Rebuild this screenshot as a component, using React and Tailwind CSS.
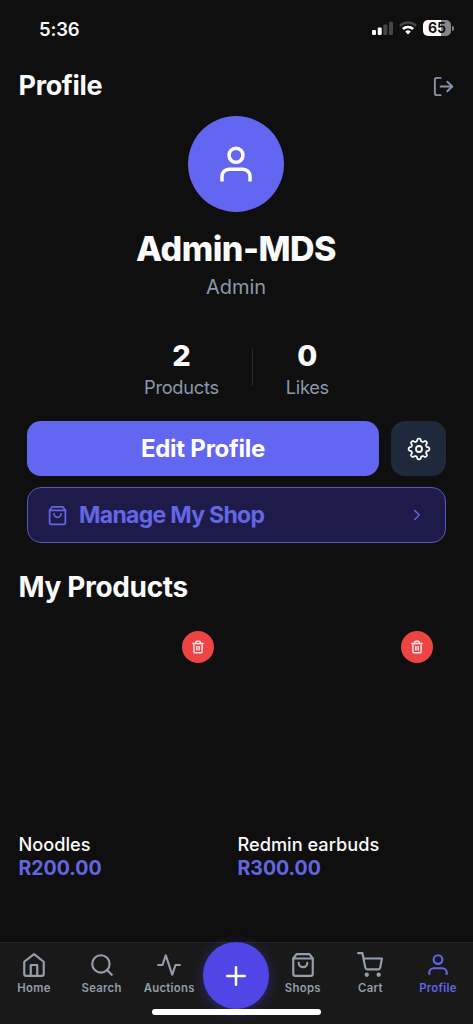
import {
    FiActivity,
    FiChevronRight,
    FiHome,
    FiLogOut,
    FiPlus,
    FiSearch,
    FiShoppingBag,
    FiShoppingCart,
    FiTrash2,
    FiUser,
} from "react-icons/fi";

const products = [
    { id: 1, name: "Noodles", price: "R200.00" },
    { id: 2, name: "Redmin earbuds", price: "R300.00" },
];

const leftTabs = [
    { label: "Home", Icon: FiHome },
    { label: "Search", Icon: FiSearch },
    { label: "Auctions", Icon: FiActivity },
];

const rightTabs = [
    { label: "Shops", Icon: FiShoppingBag },
    { label: "Cart", Icon: FiShoppingCart },
    { label: "Profile", Icon: FiUser, active: true },
];

// eight rounded teeth around the centre
const gearPoints = Array.from({ length: 192 }, (_, i) => {
    const angle = (i / 192) * Math.PI * 2;
    const radius = 9.1 + 1.3 * Math.tanh(1.8 * Math.cos(angle * 8));
    return `${(12 + radius * Math.cos(angle)).toFixed(2)},${(12 + radius * Math.sin(angle)).toFixed(2)}`;
}).join(" ");

function GearIcon({ className }) {
    return (
        <svg className={className} viewBox="0 0 24 24" fill="none" stroke="currentColor" strokeWidth="1.8" strokeLinejoin="round">
            <polygon points={gearPoints} />
            <circle cx="12" cy="12" r="3" />
        </svg>
    );
}

function StatusBar() {
    return (
        <div className="flex h-14 shrink-0 items-center justify-between pl-[39px] pr-[19px]">
            <span className="mt-px text-[18.5px] leading-6 font-semibold tracking-[-0.2px]">5:36</span>
            <div className="flex items-center gap-[6px]">
                <svg width="22" height="14" viewBox="0 0 22 14">
                    <rect x="1" y="9" width="4" height="5" rx="1" fill="#fff" />
                    <rect x="6.7" y="6.5" width="4" height="7.5" rx="1" fill="#fff" />
                    <rect x="12.3" y="3.5" width="4" height="10.5" rx="1" fill="#464646" />
                    <rect x="18" y="0.8" width="4" height="13.2" rx="1" fill="#464646" />
                </svg>
                <svg width="18" height="14" viewBox="0 0 18 14" fill="none" strokeWidth="2.5">
                    <path d="M1 4.8a11.5 11.5 0 0 1 16 0" stroke="#464646" />
                    <path d="M3.8 8a7.5 7.5 0 0 1 10.4 0" stroke="#fff" />
                    <path d="M9 13.5 6.2 10.7a4 4 0 0 1 5.6 0z" fill="#fff" />
                </svg>
                <div className="flex items-center gap-px">
                    <div className="flex h-4 w-7 items-center justify-center rounded-[5px] bg-linear-to-r from-white from-65% to-[#858585] to-65%">
                        <span className="text-[14px] leading-4 font-bold text-[#111]">65</span>
                    </div>
                    <div className="h-[5px] w-[2px] rounded-r-full bg-[#858585]" />
                </div>
            </div>
        </div>
    );
}

function Stat({ value, label }) {
    return (
        <div className="flex flex-col items-center">
            <span className="text-[29px] leading-9 font-extrabold">{value}</span>
            <span className="-mt-px pb-px text-[18.3px] leading-7 tracking-[-0.3px] text-[#8b98ab]">{label}</span>
        </div>
    );
}

function ProductCard({ name, price }) {
    return (
        <div className="flex w-[200px] flex-col">
            <div className="flex h-[212px] justify-end pt-[11px] pr-1">
                <button className="flex size-8 items-center justify-center rounded-full bg-[#ef4444]">
                    <FiTrash2 className="size-[14px] text-[#ffe3e3]" strokeWidth="2.6" />
                </button>
            </div>
            <span className="pl-[0.5px] text-[18.2px] leading-6 font-medium">{name}</span>
            <span className="pl-[0.5px] text-[19.5px] leading-6 font-bold text-[#6366e0]">{price}</span>
        </div>
    );
}

function Tab({ label, Icon, active }) {
    return (
        <button
            className={`flex w-[67.6px] shrink-0 flex-col items-center pt-[9px] ${
                active ? "text-[#6366e5]" : "text-[#959ead]"
            }`}
        >
            <Icon className="size-[26px]" strokeLinecap={active ? "butt" : "round"} />
            <span className="mt-[2px] text-[11.3px] leading-4 font-semibold tracking-[0.3px]">{label}</span>
        </button>
    );
}

export default function App() {
    return (
        <div className="flex h-[1024px] w-[473px] flex-col overflow-hidden bg-[#0f0f0f] font-['Inter',sans-serif] text-[#fafafa]">
            <StatusBar />

            <header className="flex h-[60px] shrink-0 items-center justify-between pl-[18.5px] pr-[18px]">
                <h1 className="text-[27px] leading-8 font-bold tracking-[-0.35px]">Profile</h1>
                <FiLogOut className="size-[23px] text-[#8793a8]" />
            </header>

            <main className="flex flex-1 flex-col">
                <section className="flex flex-col items-center pr-px">
                    <div className="flex size-24 items-center justify-center rounded-full bg-[#6366f1]">
                        <FiUser className="size-[42px] text-white" strokeLinecap="square" />
                    </div>
                    <h2 className="mt-[17px] text-[34px] leading-10 font-extrabold tracking-[-0.5px]">Admin-MDS</h2>
                    <p className="mt-[4px] mb-px text-[20px] leading-7 text-[#8b98ab]">Admin</p>
                </section>

                <section className="mt-[36px] flex items-center justify-center gap-[33px]">
                    <Stat value="2" label="Products" />
                    <div className="mt-[-5px] h-[37px] w-px bg-[#252a35]" />
                    <Stat value="0" label="Likes" />
                </section>

                <section className="mt-[19px] flex flex-col gap-[11px] px-[27px]">
                    <div className="flex gap-3">
                        <button className="h-[55px] flex-1 rounded-[14px] bg-[#6366f1] text-[24px] font-bold tracking-[-0.25px] text-white">
                            Edit Profile
                        </button>
                        <button className="flex size-[55px] items-center justify-center rounded-[14px] bg-[#1e293b]">
                            <GearIcon className="size-6" />
                        </button>
                    </div>
                    <button className="flex h-[56px] items-center rounded-[14px] border border-[#5558bf] bg-[#1e1b4b] px-[19px] text-[#6366e5]">
                        <FiShoppingBag className="size-[21px]" />
                        <span className="ml-[11px] text-[23px] leading-8 font-bold tracking-[-0.7px]">
                            Manage My Shop
                        </span>
                        <FiChevronRight className="ml-auto size-[18px]" />
                    </button>
                </section>

                <section className="mt-[27px] px-[18px]">
                    <h2 className="pl-[0.5px] text-[28px] leading-[34px] font-bold tracking-[-0.35px]">My Products</h2>
                    <div className="mt-[16px] flex gap-[19px]">
                        {products.map((product) => (
                            <ProductCard key={product.id} name={product.name} price={product.price} />
                        ))}
                    </div>
                </section>
            </main>

            <nav className="relative flex h-[82px] shrink-0 justify-center border-t border-[#232533] bg-[#191919] pr-px">
                {leftTabs.map((tab) => (
                    <Tab key={tab.label} {...tab} />
                ))}
                <button className="-mt-px flex h-[67px] w-[66px] shrink-0 items-center justify-center rounded-full bg-[#4f46e5] text-white shadow-[0_3px_14px_rgba(79,70,229,0.4)]">
                    <FiPlus className="size-[30px]" />
                </button>
                {rightTabs.map((tab) => (
                    <Tab key={tab.label} {...tab} />
                ))}
                {/* home indicator */}
                <div className="absolute bottom-[9px] left-[152px] h-[6px] w-[169px] rounded-full bg-white" />
            </nav>
        </div>
    );
}
